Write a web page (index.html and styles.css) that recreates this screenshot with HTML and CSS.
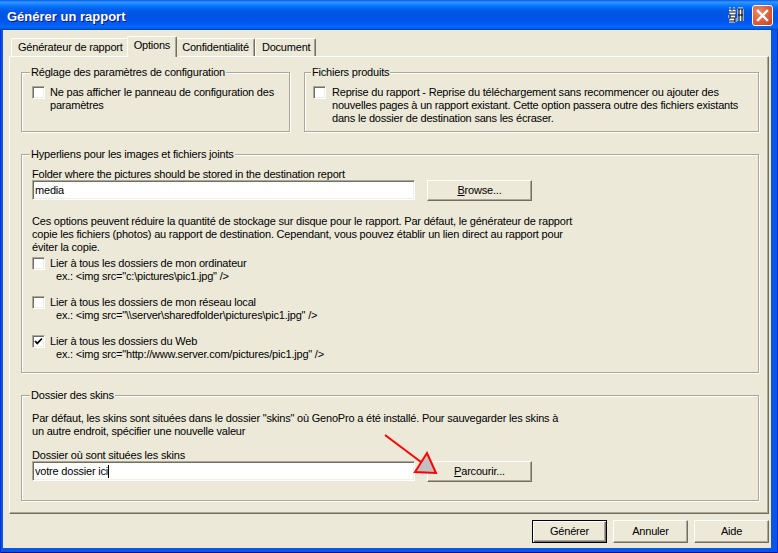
FILE: index.html
```html
<!DOCTYPE html>
<html lang="fr">
<head>
<meta charset="utf-8">
<title>Générer un rapport</title>
<link rel="stylesheet" href="styles.css">
</head>
<body>
<div class="window">
  <div class="titlebar">
    <span class="title">Générer un rapport</span>
    <svg class="ime" width="16" height="17" viewBox="0 0 16 17">
      <g fill="none" stroke="#fff" stroke-width="3" stroke-linejoin="round">
        <path d="M1 2h2M5 2h2M1 5h7M2 8h5M2 8v3M2 11h5M7 11v4M1 14h6M10 2h5M11 2v12M14 2v12M10 8h5"/>
      </g>
      <g fill="none" stroke="#000" stroke-width="1.2">
        <path d="M1 2h2M5 2h2M1 5h7M2 8h5M2 8v3M2 11h5M7 11v4M1 14h6M10 2h5M11 2v12M14 2v12M10 8h5"/>
      </g>
    </svg>
    <span class="close" aria-label="Fermer">
      <svg width="13" height="13" viewBox="0 0 13 13"><path d="M2 2L11 11M11 2L2 11" stroke="#fff" stroke-width="2.4" stroke-linecap="square"/></svg>
    </span>
  </div>

  <div class="client">
    <div class="tabs">
      <div class="tab">Générateur de rapport</div>
      <div class="tab active">Options</div>
      <div class="tab">Confidentialité</div>
      <div class="tab">Document</div>
    </div>

    <div class="panel">
      <div class="row-top">
        <fieldset class="group g-config">
          <legend>Réglage des paramètres de configuration</legend>
          <div class="check-item">
            <span class="checkbox"></span>
            <div class="check-text">Ne pas afficher le panneau de configuration des<br>paramètres</div>
          </div>
        </fieldset>
        <fieldset class="group g-files">
          <legend>Fichiers produits</legend>
          <div class="check-item wide">
            <span class="checkbox"></span>
            <div class="check-text">Reprise du rapport - Reprise du téléchargement sans recommencer ou ajouter des<br>nouvelles pages à un rapport existant. Cette option passera outre des fichiers existants<br>dans le dossier de destination sans les écraser.</div>
          </div>
        </fieldset>
      </div>

      <fieldset class="group g-links">
        <legend>Hyperliens pour les images et fichiers joints</legend>
        <div class="label">Folder where the pictures should be stored in the destination report</div>
        <div class="field-row">
          <div class="input">media</div>
          <div class="btn"><u>B</u>rowse...</div>
        </div>
        <div class="desc">Ces options peuvent réduire la quantité de stockage sur disque pour le rapport. Par défaut, le générateur de rapport<br>copie les fichiers (photos) au rapport de destination. Cependant, vous pouvez établir un lien direct au rapport pour<br>éviter la copie.</div>
        <div class="check-item link-item">
          <span class="checkbox"></span>
          <div class="check-text">Lier à tous les dossiers de mon ordinateur<div class="example">ex.: &lt;img src="c:\pictures\pic1.jpg" /&gt;</div></div>
        </div>
        <div class="check-item link-item">
          <span class="checkbox"></span>
          <div class="check-text">Lier à tous les dossiers de mon réseau local<div class="example">ex.: &lt;img src="\\server\sharedfolder\pictures\pic1.jpg" /&gt;</div></div>
        </div>
        <div class="check-item link-item">
          <span class="checkbox checked"><svg width="11" height="11" viewBox="0 0 11 11"><path d="M2 5L4.2 7.4L9 2.5" fill="none" stroke="#000" stroke-width="1.7"/></svg></span>
          <div class="check-text">Lier à tous les dossiers du Web<div class="example">ex.: &lt;img src="http://www.server.com/pictures/pic1.jpg" /&gt;</div></div>
        </div>
      </fieldset>

      <fieldset class="group g-skins">
        <legend>Dossier des skins</legend>
        <div class="desc">Par défaut, les skins sont situées dans le dossier "skins" où GenoPro a été installé. Pour sauvegarder les skins à<br>un autre endroit, spécifier une nouvelle valeur</div>
        <div class="label skins-label">Dossier où sont situées les skins</div>
        <div class="field-row">
          <div class="input">votre dossier ici<span class="caret"></span></div>
          <div class="btn"><u>P</u>arcourir...</div>
        </div>
      </fieldset>
    </div>

    <div class="actions">
      <div class="btn big default">Générer</div>
      <div class="btn big">Annuler</div>
      <div class="btn big">Aide</div>
    </div>
  </div>

  <svg class="annotation" width="60" height="48" viewBox="0 0 60 48">
    <path d="M5 5L41 32" stroke="#ff0000" stroke-width="2"/>
    <path d="M47 23L35 42L56 43Z" fill="#c0c0c0" stroke="#ff0000" stroke-width="2" stroke-linejoin="miter"/>
  </svg>
</div>
</body>
</html>
```

FILE: styles.css
```css
* { box-sizing: border-box; }

html, body {
  margin: 0;
  padding: 0;
}

body {
  width: 778px;
  height: 553px;
  overflow: hidden;
  font-family: "Liberation Sans", Arial, sans-serif;
  font-size: 11px;
  line-height: 13px;
  letter-spacing: -0.2px;
  color: #000;
  background: #0754e4;
}

.window {
  position: relative;
  width: 778px;
  height: 553px;
  display: flex;
  flex-direction: column;
  background: #0a55e6;
  box-shadow: inset 1px 0 0 #0831d9, inset -1px 0 0 #0831d9, inset 0 -1px 0 #00138c;
}

/* ---------- title bar ---------- */
.titlebar {
  flex: none;
  height: 30px;
  display: flex;
  align-items: center;
  padding: 0 5px 0 7px;
  background: linear-gradient(to bottom,
    #0058ee 0px, #3a93ff 2px, #288eff 3px, #127dff 5px, #036ffc 7px,
    #0262ee 9px, #0057e5 12px, #0054e3 16px, #0055eb 20px, #005bf5 24px,
    #026afe 26px, #0062ef 28px, #0052d6 29px, #0040ab 30px);
}

.title {
  flex: 1;
  padding-top: 2px;
  font-family: "Liberation Sans", Arial, sans-serif;
  font-weight: bold;
  font-size: 13px;
  letter-spacing: 0;
  color: #fff;
  text-shadow: 1px 1px 0 #0a1883;
}

.ime {
  display: block;
  margin-right: 8px;
  margin-top: 1px;
}

.close {
  width: 21px;
  height: 21px;
  border: 1px solid #fff;
  border-radius: 3px;
  display: flex;
  align-items: center;
  justify-content: center;
  background: radial-gradient(circle at 30% 30%, #e98a6c 0%, #e2623f 45%, #c9401f 100%);
}

.close svg { display: block; }

/* ---------- client area ---------- */
.client {
  flex: 1;
  margin: 0 7px 5px 3px;
  padding: 6px 2px 5px 6px;
  background: #ece9d8;
  display: flex;
  flex-direction: column;
}

.tabs {
  flex: none;
  height: 20px;
  display: flex;
  align-items: flex-end;
  padding-left: 2px;
}

.tab {
  height: 18px;
  padding: 2px 5px 0 6px;
  border-top: 1px solid #fff;
  border-left: 1px solid #fff;
  border-right: 1px solid #716f64;
  box-shadow: inset -1px 0 0 #aca899;
  border-radius: 2px 2px 0 0;
  background: #ece9d8;
  white-space: nowrap;
}

.tab.active {
  position: relative;
  z-index: 1;
  height: 21px;
  margin: 0 -2px -1px;
  padding: 2px 6px 0;
}

.panel {
  flex: 1;
  display: flex;
  flex-direction: column;
  padding: 9px 9px 0 11px;
  border-top: 1px solid #fff;
  border-left: 1px solid #fff;
  border-right: 1px solid #716f64;
  border-bottom: 1px solid #716f64;
  box-shadow: inset -1px -1px 0 #aca899;
}

/* ---------- group boxes ---------- */
.row-top {
  display: grid;
  grid-template-columns: 269px 1fr;
  column-gap: 14px;
}

.group {
  margin: 0;
  min-width: 0;
  border: 1px solid #aca899;
  box-shadow: inset 1px 1px 0 #fff, 1px 1px 0 #fff;
  padding: 7px 8px 6px 10px;
}

.group legend {
  padding: 0 1px;
  margin-left: -2px;
  line-height: 13px;
  background: #ece9d8;
}

.g-files { padding-left: 8px; }

.g-links {
  margin-top: 16px;
  padding: 7px 8px 11px 10px;
}

.g-skins {
  margin-top: 16px;
  padding: 10px 8px 18px 10px;
}

.check-item {
  display: flex;
  align-items: flex-start;
  gap: 5px;
}

.check-item.wide { gap: 6px; }

.check-text { white-space: nowrap; }

.example { padding-left: 6px; }

.checkbox {
  flex: none;
  width: 13px;
  height: 13px;
  background: #fff;
  border-top: 1px solid #aca899;
  border-left: 1px solid #aca899;
  border-right: 1px solid #fff;
  border-bottom: 1px solid #fff;
  box-shadow: inset 1px 1px 0 #716f64, inset -1px -1px 0 #f1efe2;
  display: flex;
  align-items: center;
  justify-content: center;
}

.checkbox svg { display: block; }

.desc { white-space: nowrap; }

.g-links .desc { margin-top: 14px; }

.link-item { margin-top: 13px; }
.desc + .link-item { margin-top: 3px; }

.label { white-space: nowrap; }
.skins-label { margin-top: 11px; }

.field-row {
  display: flex;
  align-items: flex-start;
  gap: 12px;
  margin-top: -1px;
}

.input {
  width: 383px;
  height: 20px;
  padding: 0 2px;
  line-height: 18px;
  background: #fff;
  border-top: 1px solid #aca899;
  border-left: 1px solid #aca899;
  border-right: 1px solid #fff;
  border-bottom: 1px solid #fff;
  box-shadow: inset 1px 1px 0 #716f64, inset -1px -1px 0 #f1efe2;
  white-space: nowrap;
}

.caret {
  display: inline-block;
  width: 1px;
  height: 13px;
  background: #000;
  vertical-align: -3px;
}

/* ---------- buttons ---------- */
.btn {
  width: 105px;
  height: 21px;
  line-height: 19px;
  text-align: center;
  background: #ece9d8;
  border: 1px solid;
  border-color: #fff #716f64 #716f64 #fff;
  box-shadow: inset -1px -1px 0 #aca899;
  white-space: nowrap;
}

.actions {
  flex: none;
  display: flex;
  justify-content: flex-end;
  gap: 6px;
  margin-top: 6px;
}

.btn.big {
  width: 75px;
  height: 23px;
  line-height: 21px;
}

.btn.default {
  border-color: #000;
  box-shadow: inset 1px 1px 0 #fff, inset -1px -1px 0 #716f64, inset -2px -2px 0 #aca899;
}

/* ---------- red annotation arrow (drawn over the dialog) ---------- */
.annotation {
  position: absolute;
  left: 380px;
  top: 430px;
  pointer-events: none;
}
```
